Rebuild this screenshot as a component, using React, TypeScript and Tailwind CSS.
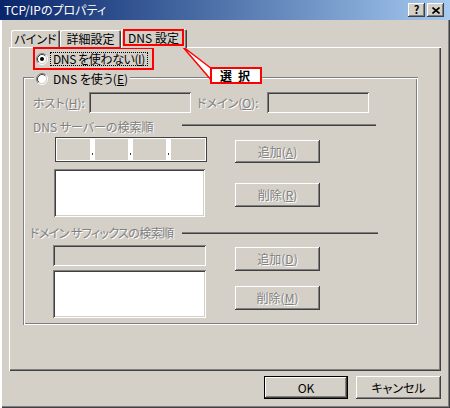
import React from 'react';

// 3D borders (Windows 2000 style)
const raised = "shadow-[inset_-1px_-1px_0_#404040,inset_1px_1px_0_#fff,inset_-2px_-2px_0_#808080]";
const sunken = "shadow-[inset_1px_1px_0_#808080,inset_-1px_-1px_0_#fff,inset_2px_2px_0_#404040,inset_-2px_-2px_0_#d4d0c8]";
const etched = "shadow-[inset_1px_1px_0_#808080,inset_2px_2px_0_#fff,inset_-1px_-1px_0_#fff,inset_-2px_-2px_0_#808080]";
const tab = "shadow-[inset_1px_1px_0_#fff,inset_-1px_0_0_#404040,inset_-2px_0_0_#808080]";
const dis = "text-[#808080] [text-shadow:1px_1px_0_#fff]";

function Radio({ checked }: { checked?: boolean }) {
  return (
    <svg width="12" height="12" viewBox="0 0 12 12" className="shrink-0">
      <circle cx="6" cy="6" r="4.5" fill="#fff" />
      <path d="M2.11 9.89A5.5 5.5 0 0 1 9.89 2.11" stroke="#808080" fill="none" />
      <path d="M9.89 2.11A5.5 5.5 0 0 1 2.11 9.89" stroke="#fff" fill="none" />
      <path d="M2.82 9.18A4.5 4.5 0 0 1 9.18 2.82" stroke="#404040" fill="none" />
      <path d="M9.18 2.82A4.5 4.5 0 0 1 2.82 9.18" stroke="#d4d0c8" fill="none" />
      {checked && <circle cx="6" cy="6" r="2" fill="#000" />}
    </svg>
  );
}

function Btn({ children, className = '' }: { children: React.ReactNode; className?: string }) {
  return (
    <button type="button" className={`flex items-center justify-center bg-[#d4d0c8] ${raised} ${dis} ${className}`}>
      {children}
    </button>
  );
}

function IpSep() {
  return (
    <div className="w-[5px] flex items-end justify-center pb-[5px]">
      <div className="w-px h-[2px] bg-[#404040]" />
    </div>
  );
}

export default function App() {
  return (
    <div className="relative w-[450px] h-[408px] overflow-hidden whitespace-nowrap bg-[#d4d0c8] font-['Noto_Sans_CJK_JP',sans-serif] text-[12px] leading-[14px] text-black [font-feature-settings:'palt']">
      {/* タイトルバー */}
      <div className="h-[20px] flex items-center pl-[4px] pr-[6px] bg-linear-to-r from-[#0a246a] to-[#a6caf0]">
        <span className="flex-1 text-white">TCP/IPのプロパティ</span>
        <div className="flex gap-[2px]">
          <button type="button" className={`w-[17px] h-[14px] flex items-center justify-center bg-[#d4d0c8] ${raised} font-bold text-[11px] leading-[11px] pb-px`}>?</button>
          <button type="button" className={`w-[17px] h-[14px] flex items-center justify-center bg-[#d4d0c8] ${raised}`}>
            <svg width="8" height="7" viewBox="0 0 8 7">
              <path d="M0.5 0.5L7.5 6.5M7.5 0.5L0.5 6.5" stroke="#000" strokeWidth="1.6" />
            </svg>
          </button>
        </div>
      </div>

      {/* 本体 */}
      <div className="flex flex-col h-[388px] pl-[9px] pt-[9px] shadow-[inset_2px_0_0_#fff,inset_-1px_-1px_0_#404040,inset_-2px_-2px_0_#808080]">
        {/* タブ */}
        <div className="relative z-10 flex items-end h-[18px] ml-[2px]">
          <div className={`h-[17px] w-[49px] flex items-center justify-center rounded-t-[2px] ${tab}`}>バインド</div>
          <div className={`h-[17px] w-[61px] flex items-center justify-center rounded-t-[2px] ${tab}`}>詳細設定</div>
          <div className={`relative -mb-px h-[19px] w-[66px] bg-[#d4d0c8] rounded-t-[2px] ${tab}`}>
            <div className="absolute left-[2px] top-0 w-[61px] h-[17px] border-2 border-[#f00] flex items-center justify-center">
              DNS 設定
            </div>
          </div>
        </div>

        {/* タブパネル */}
        <div className="relative flex flex-col w-[432px] h-[324px] shadow-[inset_1px_1px_0_#fff,inset_-1px_-1px_0_#404040,inset_-2px_-2px_0_#808080]">
          <div className="ml-[24px] w-[121px] h-[23px] border-2 border-[#f00] flex items-center">
            <span className="ml-px flex"><Radio checked /></span>
            <span className="ml-[2px] h-[14px] px-[2px] border border-dotted border-black flex items-center tracking-[-0.4px]">
              DNS を使わない(<u>I</u>)
            </span>
          </div>

          {/* DNS を使う グループ */}
          <div className={`relative flex flex-col ml-[14px] mt-[7px] w-[395px] h-[248px] ${etched}`}>
            <div className="absolute left-[11px] top-[-5px] h-[14px] px-[2px] flex items-center bg-[#d4d0c8]">
              <Radio />
              <span className="ml-[5px]">DNS を使う(<u>E</u>)</span>
            </div>

            <div className="flex items-center mt-[15px] h-[21px] pl-[10px]">
              <span className={`w-[56px] ${dis}`}>ホスト(<u>H</u>):</span>
              <div className={`w-[102px] h-full ${sunken}`} />
              <span className={`ml-[6px] w-[70px] ${dis}`}>ドメイン(<u>O</u>):</span>
              <div className={`w-[102px] h-full ${sunken}`} />
            </div>

            <div className="flex items-start mt-[7px] h-[14px] pl-[10px]">
              <span className={`w-[149px] ${dis}`}>DNS サーバーの検索順</span>
              <div className="mt-[4px] w-[194px] border-t border-t-[#808080] border-b border-b-[#404040]" />
            </div>

            <div className="flex mt-[3px]">
              <div className="ml-[32px] w-[152px] flex flex-col">
                <div className="h-[25px] w-[152px] flex p-[2px] bg-white shadow-[inset_0_0_0_1px_#404040]">
                  <div className="w-[33px] bg-[#d4d0c8]" />
                  <IpSep />
                  <div className="w-[33px] bg-[#d4d0c8]" />
                  <IpSep />
                  <div className="w-[33px] bg-[#d4d0c8]" />
                  <IpSep />
                  <div className="flex-1 bg-[#d4d0c8]" />
                </div>
                <div className={`mt-[7px] -ml-px w-[151px] h-[48px] bg-white ${sunken}`} />
              </div>
              <div className="ml-[28px] w-[85px] flex flex-col">
                <Btn className="mt-[3px] h-[23px]">追加(<u>A</u>)</Btn>
                <Btn className="mt-[20px] h-[24px]">削除(<u>R</u>)</Btn>
              </div>
            </div>

            <div className="flex items-start mt-[9px] h-[14px] pl-[7px]">
              <span className={`w-[152px] tracking-[-0.6px] ${dis}`}>ドメイン サフィックスの検索順</span>
              <div className="mt-[6px] w-[196px] border-t border-t-[#808080] border-b border-b-[#404040]" />
            </div>

            <div className="flex mt-[5px]">
              <div className="ml-[30px] w-[153px] flex flex-col">
                <div className={`h-[21px] ${sunken}`} />
                <div className={`mt-[4px] h-[48px] bg-white ${sunken}`} />
              </div>
              <div className="ml-[29px] w-[85px] flex flex-col">
                <Btn className="mt-[2px] h-[24px]">追加(<u>D</u>)</Btn>
                <Btn className="mt-[15px] h-[24px]">削除(<u>M</u>)</Btn>
              </div>
            </div>
          </div>
        </div>

        {/* OK / キャンセル */}
        <div className="flex justify-end gap-[8px] mt-[5px] w-[432px]">
          <button type="button" className={`w-[84px] h-[23px] flex items-center justify-center border border-black bg-[#d4d0c8] ${raised}`}>OK</button>
          <button type="button" className={`w-[85px] h-[23px] flex items-center justify-center bg-[#d4d0c8] ${raised}`}>キャンセル</button>
        </div>
      </div>

      {/* 吹き出し「選択」 */}
      <svg className="absolute left-[180px] top-[44px]" width="34" height="40" viewBox="0 0 34 40">
        <polygon points="2,2 32,25 32,37" fill="#fff" stroke="#f00" strokeWidth="1.5" />
      </svg>
      <div className="absolute left-[210px] top-[67px] w-[52px] h-[17px] bg-white border-2 border-[#f00] flex items-center pl-[8px] font-bold">
        <span>選</span>
        <span className="ml-[6px]">択</span>
      </div>
    </div>
  );
}
